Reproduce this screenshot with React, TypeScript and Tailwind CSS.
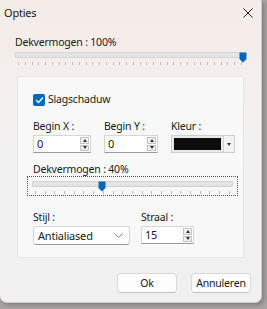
import React from 'react';

const font = { fontFamily: '"Noto Sans", "Open Sans", sans-serif' };

const Ticks = ({ count }: { count: number }) => (
    <div className="flex justify-between px-[3px]">
        {Array.from({ length: count }).map((_, i) => (
            <div key={i} className="w-px h-[3px] bg-[#bdbdbd]" />
        ))}
    </div>
);

const Thumb = () => (
    <svg width="8" height="11" viewBox="0 0 8 11" className="block">
        <path d="M1 0.5 H7 A0.5 0.5 0 0 1 7.5 1 V7 L4 10.5 L0.5 7 V1 A0.5 0.5 0 0 1 1 0.5 Z" fill="#0067c0" />
    </svg>
);

const Slider = ({ pct, ticks }: { pct: number; ticks: number }) => (
    <div className="relative">
        <div className="h-[6px] bg-[#e4e4e4] border border-[#d4d4d4] rounded-[1px] mt-[2px]" />
        <div className="absolute top-0" style={{ left: `calc(${pct}% - ${pct === 100 ? 6 : 4}px)` }}>
            <Thumb />
        </div>
        <div className="mt-[4px]">
            <Ticks count={ticks} />
        </div>
    </div>
);

const Spin = ({ value, width }: { value: string; width: string }) => (
    <div className={`${width} h-[18px] flex bg-white border border-[#d6d6d6] border-b-[#9a9a9a]`}>
        <div className="flex-1 pl-[3px] text-[11px] leading-[16px] text-[#1a1a1a]">{value}</div>
        <div className="w-[9px] flex flex-col gap-[1px] py-[1px] mr-[1px]">
            <div className="flex-1 border border-[#c4c4c4] bg-[#f0f0f0] flex items-center justify-center">
                <div className="w-0 h-0 border-l-[2.5px] border-r-[2.5px] border-b-[3px] border-l-transparent border-r-transparent border-b-[#333]" />
            </div>
            <div className="flex-1 border border-[#c4c4c4] bg-[#f0f0f0] flex items-center justify-center">
                <div className="w-0 h-0 border-l-[2.5px] border-r-[2.5px] border-t-[3px] border-l-transparent border-r-transparent border-t-[#333]" />
            </div>
        </div>
    </div>
);

export default function App() {
    return (
        <div className="w-[267px] h-[309px] bg-[#a9a4a1] overflow-hidden text-[10.5px] tracking-[-0.2px]" style={font}>
            <div className="w-[262px] h-[303px] rounded-b-[7px] bg-gradient-to-b from-[#f5ece8] via-[#f2f1f1] to-[#f1f0f0] shadow-[2px_2px_4px_rgba(0,0,0,0.25)] border-r border-b border-[#cfcfcf] flex flex-col text-[#1a1a1a]">
                {/* title bar */}
                <div className="h-[26px] flex items-center justify-between pl-[4px] pr-[8px]">
                    <span className="text-[11px]">Opties</span>
                    <svg width="10" height="10" viewBox="0 0 10 10">
                        <path d="M0.5 0.5 L9.5 9.5 M9.5 0.5 L0.5 9.5" stroke="#222" strokeWidth="1" />
                    </svg>
                </div>

                <div className="px-[15px] pt-[8px]">
                    <div className="leading-[16px]">Dekvermogen : 100%</div>
                    <div className="mt-[1px] pr-[1px]">
                        <Slider pct={100} ticks={34} />
                    </div>
                </div>

                {/* group */}
                <div className="mx-[17px] mt-[11px] h-[182px] bg-[#f8f8f8] border border-[#e6e6e6] rounded-[2px] pl-[15px] pr-[4px] pt-[17px]">
                    <label className="flex items-center gap-[3px] h-[12px]">
                        <span className="w-[12px] h-[12px] rounded-[2px] bg-[#0067c0] flex items-center justify-center">
                            <svg width="9" height="8" viewBox="0 0 9 8">
                                <path d="M1 4 L3.5 6.5 L8 1.5" stroke="white" strokeWidth="1.3" fill="none" />
                            </svg>
                        </span>
                        <span>Slagschaduw</span>
                    </label>

                    <div className="flex mt-[12px]">
                        <div className="w-[71px] shrink-0">
                            <div className="leading-[16px]">Begin X :</div>
                            <div className="mt-[1px]"><Spin value="0" width="w-[58px]" /></div>
                        </div>
                        <div className="w-[67px] shrink-0">
                            <div className="leading-[16px]">Begin Y :</div>
                            <div className="mt-[1px]"><Spin value="0" width="w-[54px]" /></div>
                        </div>
                        <div className="shrink-0">
                            <div className="leading-[16px]">Kleur :</div>
                            <div className="mt-[1px] w-[64px] h-[18px] flex border border-[#cfcfcf] bg-[#e9e9e9]">
                                <div className="w-[47px] m-[2px] bg-[#0c0c0c]" />
                                <div className="flex-1 flex items-center justify-center border-l border-[#d4d4d4] bg-[#f3f3f3]">
                                    <div className="w-0 h-0 border-l-[2.5px] border-r-[2.5px] border-t-[3px] border-l-transparent border-r-transparent border-t-[#333]" />
                                </div>
                            </div>
                        </div>
                    </div>

                    <div className="mt-[9px] leading-[14px]">Dekvermogen : 40%</div>
                    <div className="-ml-[6px] w-[211px] h-[20px] border border-dotted border-[#555] px-[4px] pt-[2px]">
                        <Slider pct={35} ticks={21} />
                    </div>

                    <div className="flex mt-[13px]">
                        <div className="w-[108px] shrink-0">
                            <div className="leading-[16px]">Stijl :</div>
                            <div className="mt-[1px] w-[97px] h-[19px] bg-white border border-[#d6d6d6] border-b-[#9a9a9a] rounded-[3px] flex items-center justify-between pl-[4px] pr-[6px]">
                                <span className="text-[11px] leading-none">Antialiased</span>
                                <svg width="9" height="5" viewBox="0 0 9 5">
                                    <path d="M0.5 0.5 L4.5 4.5 L8.5 0.5" stroke="#8a8a8a" fill="none" />
                                </svg>
                            </div>
                        </div>
                        <div>
                            <div className="leading-[16px]">Straal :</div>
                            <div className="mt-[1px]"><Spin value="15" width="w-[53px]" /></div>
                        </div>
                    </div>
                </div>

                {/* buttons */}
                <div className="flex justify-end gap-[14px] pr-[10px] mt-[15px]">
                    <button className="w-[60px] h-[20px] bg-[#fdfdfd] border border-[#d9d9d9] border-b-[#c2c2c2] rounded-[4px] leading-none">Ok</button>
                    <button className="w-[60px] h-[20px] bg-[#fdfdfd] border border-[#d9d9d9] border-b-[#c2c2c2] rounded-[4px] leading-none">Annuleren</button>
                </div>
            </div>
        </div>
    );
}
